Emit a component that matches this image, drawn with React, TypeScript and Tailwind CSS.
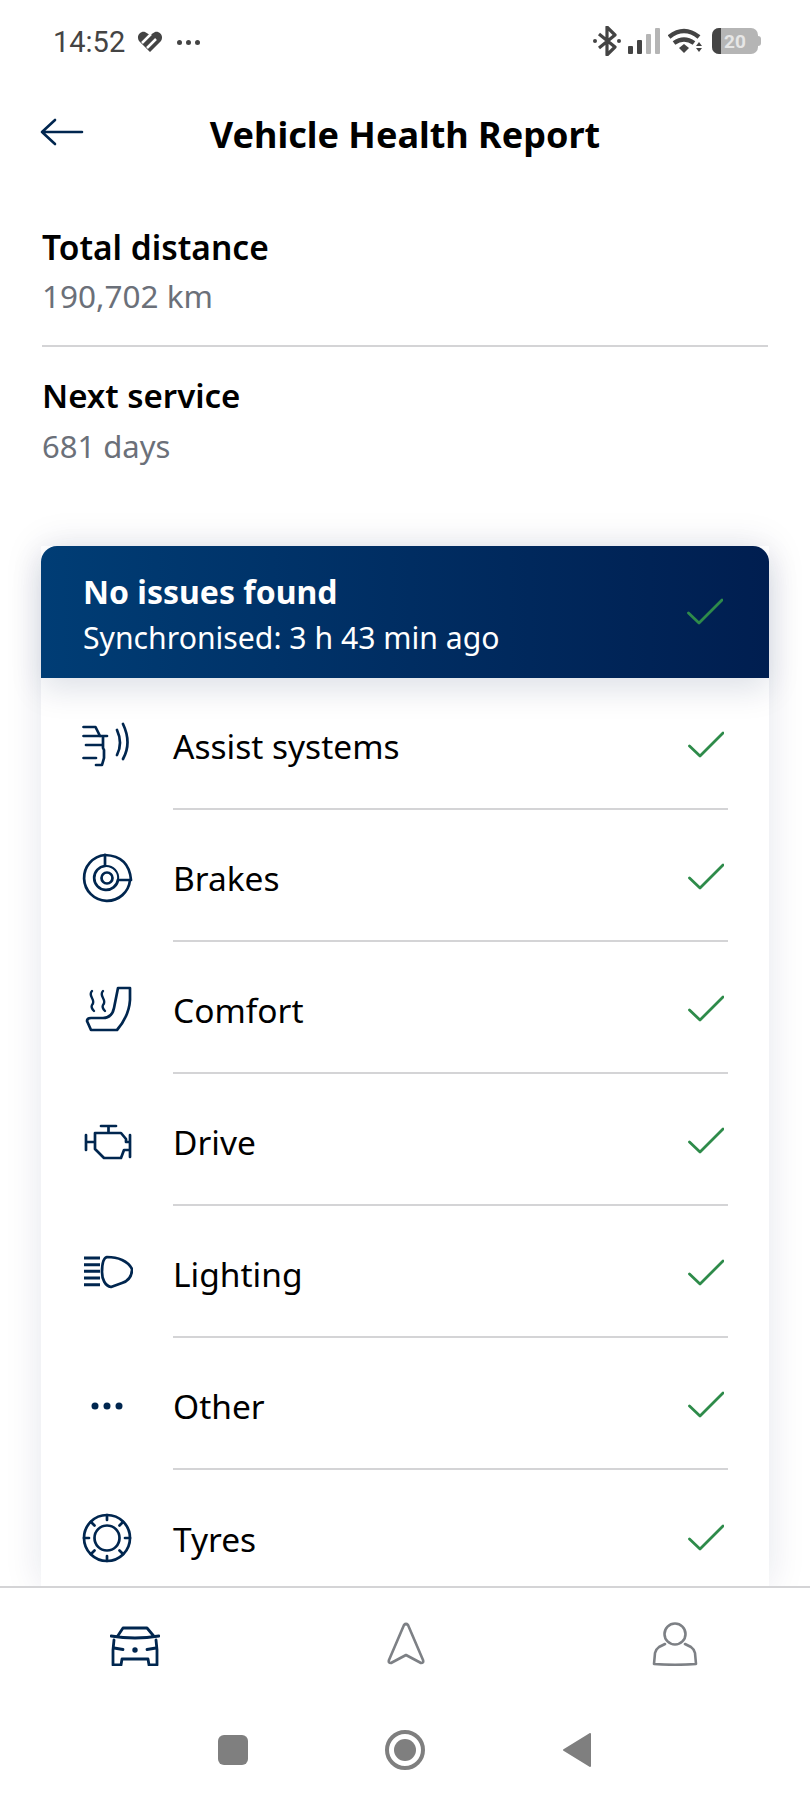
import type { ReactNode } from 'react';

const navy = '#00264f';

const Icon = ({ children }: { children: ReactNode }) => (
  <svg width="52" height="52" viewBox="0 0 52 52" fill="none" stroke={navy} strokeWidth="2.7" strokeLinecap="round" strokeLinejoin="round">
    {children}
  </svg>
);

const AssistIcon = () => (
  <Icon>
    <path d="M2.500 7h12l4.500 9M2.500 16H26M5 25h17M22 16v12l1 2v8l-2 7h-6M2.500 38H15" />
    <path d="M36 10q6 13 0 25M42 4q9 19 0 35" />
  </Icon>
);

const BrakesIcon = () => (
  <Icon>
    <path d="M24 3A23 23 0 1 0 49 28" />
    <path d="M24 3q24 1 26 25H37" />
    <circle cx="26" cy="26" r="5.500" />
    <path d="M24 3v11a12 12 0 1 0 13 14" />
    <path d="M24 14a12 12 0 0 1 13 14" strokeWidth="2" />
  </Icon>
);

const ComfortIcon = () => (
  <Icon>
    <path d="M37 4h12v12q-1 16-13 30H10l-4-9q0-3 4-3h12q9 0 11-10z" />
    <path d="M11 7c-5 5 5 9 0 14-1 2 0 4 2 6M22 7c-5 5 5 9 0 14-1 2 0 4 2 6" strokeWidth="2.400" />
  </Icon>
);

const DriveIcon = () => (
  <Icon>
    <path d="M20 10h15M27.500 10v7M14 17h26l5 6v3h4M5 19v15M5 26h9M14 17v16l9 9h17l3-8h6M49 19v22" />
  </Icon>
);

const LightingIcon = () => (
  <Icon>
    <path d="M3 10h16M3 16.700h16M3 23.300h16M3 30h16M3 36.700h16" strokeWidth="3" strokeLinecap="butt" />
    <path d="M26 9C37 9 47 13 51 21c0 7-4 12-10 14l-11 4c-6-1-9-8-9-15s1-14 5-15z" />
  </Icon>
);

const OtherIcon = () => (
  <Icon>
    <circle cx="14" cy="26" r="3.500" fill={navy} stroke="none" />
    <circle cx="26" cy="26" r="3.500" fill={navy} stroke="none" />
    <circle cx="38" cy="26" r="3.500" fill={navy} stroke="none" />
  </Icon>
);

const TyresIcon = () => (
  <Icon>
    <circle cx="26" cy="26" r="23" />
    <circle cx="26" cy="26" r="12.500" />
    <path d="M26 3v5M26 44v5M3 26h5M44 26h5M10 10l3.500 3.500M38.500 38.500l3.500 3.500M42 10l-3.500 3.500M13.500 38.500L10 42" />
  </Icon>
);

const Check = () => (
  <svg width="36" height="28" viewBox="0 0 36 28" fill="none" stroke="#2e8b4a" strokeWidth="2.8" strokeLinecap="round" strokeLinejoin="round">
    <path d="M1.500 15l10.500 10L35 2" />
  </svg>
);

const rows = [
  { label: 'Assist systems', icon: <AssistIcon /> },
  { label: 'Brakes', icon: <BrakesIcon /> },
  { label: 'Comfort', icon: <ComfortIcon /> },
  { label: 'Drive', icon: <DriveIcon /> },
  { label: 'Lighting', icon: <LightingIcon /> },
  { label: 'Other', icon: <OtherIcon /> },
  { label: 'Tyres', icon: <TyresIcon /> },
];

const StatusBar = () => (
  <div className="flex h-[82px] shrink-0 items-center justify-between pl-[53px] pr-[49px] text-[#444]">
    <div className="flex items-center pt-[2px]">
      <span className="font-['Roboto',sans-serif] text-[29px] leading-none">14:52</span>
      <svg className="ml-[12px]" width="26" height="22" viewBox="0 0 26 22">
        <path d="M13 21L2 10C-1 5 3 0 8 1l5 3 5-3c5-1 9 4 6 9z" fill="#444" />
        <path d="M5 12L14 3M10 17l9-9" stroke="#fff" strokeWidth="2.500" />
      </svg>
      <div className="ml-[14px] flex gap-[4px]">
        <span className="h-[5px] w-[5px] rounded-full bg-[#444]" />
        <span className="h-[5px] w-[5px] rounded-full bg-[#444]" />
        <span className="h-[5px] w-[5px] rounded-full bg-[#444]" />
      </div>
    </div>
    <div className="flex items-center">
      <svg width="28" height="30" viewBox="0 0 28 30" fill="none" stroke="#444" strokeWidth="3.200" strokeLinejoin="round">
        <path d="M6 8l16 13-8 8V1l8 8L6 22" />
        <circle cx="2" cy="15" r="2" fill="#444" stroke="none" />
        <circle cx="26" cy="15" r="2" fill="#444" stroke="none" />
      </svg>
      <svg className="ml-[6px]" width="33" height="28" viewBox="0 0 33 28">
        <rect x="1" y="19" width="5" height="8" rx="1" fill="#444" />
        <rect x="10" y="13" width="5" height="14" rx="1" fill="#444" />
        <rect x="19" y="7" width="5" height="20" rx="1" fill="#b5b5b5" />
        <rect x="28" y="1" width="5" height="26" rx="1" fill="#b5b5b5" />
      </svg>
      <svg className="ml-[8px]" width="36" height="26" viewBox="0 0 36 26" fill="none" stroke="#444" strokeWidth="4.500">
        <path d="M1 9q15-12 30 0M6 15q10-7 20 0" />
        <path d="M11 20l5-4 5 4-5 5z" fill="#444" stroke="none" />
        <path d="M28 18l3-4 3 4zM28 20l3 4 3-4z" fill="#444" stroke="none" />
      </svg>
      <div className="relative ml-[8px] flex h-[26px] w-[46px] items-center overflow-hidden rounded-[7px] bg-[#b5b5b5]">
        <div className="h-full w-[9px] bg-[#444]" />
        <span className="ml-[3px] font-['Roboto',sans-serif] text-[19px] font-bold leading-none text-[#e6e6e6]">20</span>
      </div>
      <div className="h-[10px] w-[3px] rounded-r bg-[#b5b5b5]" />
    </div>
  </div>
);

const App = () => {
  return (
    <div className="flex h-[1800px] w-[810px] flex-col overflow-hidden bg-white font-['Noto_Sans',sans-serif] text-black">
      <StatusBar />

      <header className="relative flex h-[106px] shrink-0 items-center justify-center">
        <svg className="absolute left-[40px] top-[35px]" width="44" height="30" viewBox="0 0 44 30" fill="none" stroke={navy} strokeWidth="2.6" strokeLinecap="round" strokeLinejoin="round">
          <path d="M2 15h40M15 3L2 15l13 12" />
        </svg>
        <h1 className="text-[36px] font-bold leading-none">Vehicle Health Report</h1>
      </header>

      <section className="shrink-0 px-[42px]">
        <div className="border-b-2 border-[#d4d4d6] pb-[29px] pt-[38px]">
          <h2 className="text-[33.5px] font-semibold leading-[42px]">Total distance</h2>
          <p className="mt-[8px] text-[31.5px] leading-[40px] text-[#6b7079]">190,702 km</p>
        </div>
        <div className="pt-[28px]">
          <h2 className="text-[33px] font-semibold leading-[42px]">Next service</h2>
          <p className="mt-[9px] text-[31px] leading-[40px] text-[#6b7079]">681 days</p>
        </div>
      </section>

      <div className="mx-[41px] mt-[80px] min-h-0 flex-1 bg-white shadow-[0_0_36px_rgba(0,30,80,0.11)]">
        <div className="relative flex h-[132px] items-center justify-between rounded-t-[16px] bg-gradient-to-r from-[#003d75] to-[#001e50] pl-[42px] pr-[46px] text-white shadow-[0_12px_32px_rgba(0,30,80,0.13)]">
          <div className="pt-[5px]">
            <div className="text-[32px] font-bold leading-[44px]">No issues found</div>
            <div className="mt-[3px] text-[30.2px] leading-[42px]">Synchronised: 3 h 43 min ago</div>
          </div>
          <Check />
        </div>
        <ul>
          {rows.map((row, i) => (
            <li key={row.label} className="flex h-[132px] items-stretch pl-[40px] pr-[41px]">
              <div className="flex w-[52px] shrink-0 items-center pt-[4px]">{row.icon}</div>
              <div className={`ml-[40px] flex flex-1 items-center justify-between pt-[4px] ${i < rows.length - 1 ? 'border-b-2 border-[#d4d4d6]' : ''}`}>
                <span className="mt-[3px] text-[33.5px] leading-none">{row.label}</span>
                <span className="mr-[4px]"><Check /></span>
              </div>
            </li>
          ))}
        </ul>
      </div>

      <nav className="h-[214px] shrink-0 border-t-2 border-[#d4d4d6] bg-white">
        <div className="flex h-[112px] items-center justify-between pl-[110px] pr-[112px]">
          <svg className="mt-[3px]" width="50" height="40" viewBox="0 0 50 40" fill="none" stroke={navy} strokeWidth="2.8" strokeLinecap="round" strokeLinejoin="round">
            <path d="M1 10q24 4 48 0M7.700 10L13 2h24l6.700 8" />
            <path d="M4 14L3 24v15h8l1-6h26l1 6h8V24l-1-10" />
            <path d="M4 22l9 1.500M37 23.500l9-1.500" />
            <circle cx="25" cy="24" r="1.300" fill={navy} />
          </svg>
          <svg width="38" height="44" viewBox="0 0 38 44" fill="none" stroke="#7d8085" strokeWidth="2.6" strokeLinecap="round" strokeLinejoin="round">
            <path d="M17 3q2-2 4 0l15 35q1 3-2 3L19 33 4 41q-3 0-2-3z" />
          </svg>
          <svg width="46" height="44" viewBox="0 0 46 44" fill="none" stroke="#7d8085" strokeWidth="2.6" strokeLinecap="round" strokeLinejoin="round">
            <circle cx="23" cy="12" r="10.500" />
            <path d="M13 22l-6 3q-3 2-4 6l-1 11q21 1.500 42 0l-1-11q-1-4-4-6l-6-3" />
          </svg>
        </div>
        <div className="flex h-[102px] items-start justify-center pr-[2px] pt-[30px]">
          <span className="mt-[5px] h-[30px] w-[30px] rounded-[6px] bg-[#7f7f7f]" />
          <span className="ml-[137px] flex h-[40px] w-[40px] items-center justify-center rounded-full border-[4px] border-[#7f7f7f]">
            <span className="h-[22px] w-[22px] rounded-full bg-[#7f7f7f]" />
          </span>
          <svg className="ml-[138px] mt-[3px]" width="28" height="34" viewBox="0 0 28 34" fill="#7f7f7f" stroke="#7f7f7f" strokeWidth="2" strokeLinejoin="round">
            <path d="M27 1v32L1 17z" />
          </svg>
        </div>
      </nav>
    </div>
  );
};

export default App;
